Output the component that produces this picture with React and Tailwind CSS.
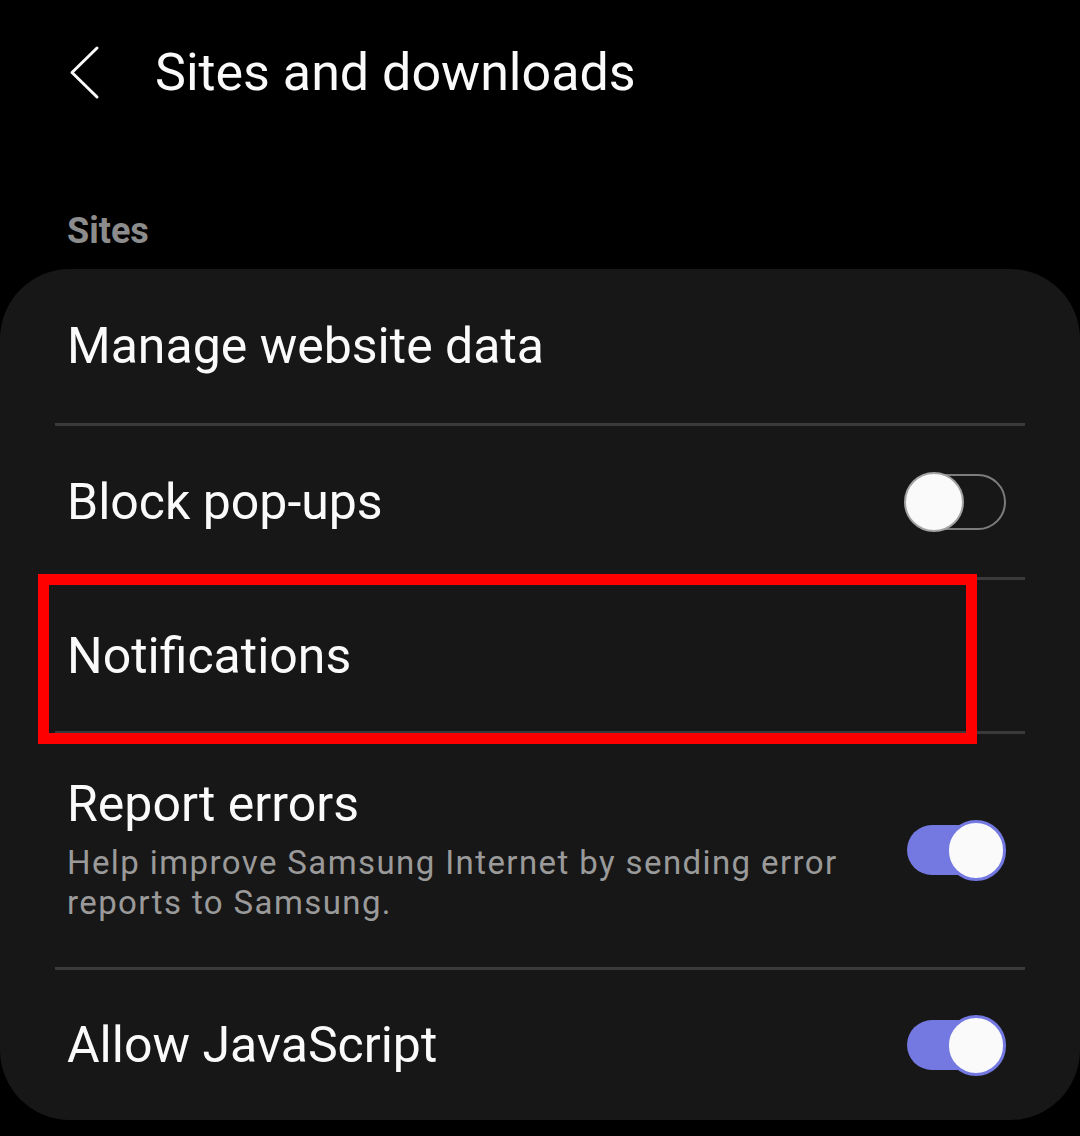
import React from "react";

function ToggleOn() {
  return (
    <div className="relative w-[99px] h-[61px] shrink-0">
      <div className="absolute left-0 top-[5px] w-[94px] h-[50px] rounded-full bg-[#7479e2]" />
      <div className="absolute right-0 top-0 w-[60px] h-[61px] rounded-full bg-[#fafafa] border-[3px] border-[#7479e2]" />
    </div>
  );
}

function ToggleOff() {
  return (
    <div className="relative w-[102px] h-[60px] shrink-0">
      <div className="absolute right-0 top-[2px] w-[98px] h-[56px] rounded-full border-2 border-[#7d7d7d]" />
      <div className="absolute left-0 top-0 w-[60px] h-[60px] rounded-full bg-[#fafafa] border-2 border-[#a3a3a3]" />
    </div>
  );
}

function Divider() {
  return <div className="mx-[55px] h-[3px] bg-[#3a3a3a]" />;
}

export default function App() {
  return (
    <div
      className="relative w-[1080px] h-[1136px] bg-black overflow-hidden text-[#fafafa]"
      style={{ fontFamily: "Roboto, 'Noto Sans', sans-serif" }}
    >
      <div className="h-[146px] flex items-center">
        <svg
          className="ml-[66px]"
          width="38"
          height="56"
          viewBox="0 0 38 56"
          fill="none"
          stroke="#fafafa"
          strokeWidth="3"
          strokeLinecap="round"
          strokeLinejoin="round"
        >
          <path d="M31 3 L6 27.5 L31 52" />
        </svg>
        <div className="ml-[51px] text-[52px] leading-[52px]">Sites and downloads</div>
      </div>

      <div className="pt-[67px] pb-[20px] pl-[67px] text-[36px] leading-[36px] font-bold text-[#8c8c8c]">
        Sites
      </div>

      <div className="bg-[#171717] rounded-[70px] h-[851px]">
        <div className="h-[154px] flex items-center pl-[67px] text-[50px] leading-[50px]">
          Manage website data
        </div>
        <Divider />
        <div className="h-[151px] flex items-center justify-between pl-[67px] pr-[74px]">
          <div className="text-[50px] leading-[50px]">Block pop-ups</div>
          <ToggleOff />
        </div>
        <Divider />
        <div className="h-[151px] flex items-center pl-[67px] text-[50px] leading-[50px]">
          Notifications
        </div>
        <Divider />
        <div className="h-[233px] flex items-center justify-between pl-[67px] pr-[74px]">
          <div className="w-[800px]">
            <div className="text-[50px] leading-[50px]">Report errors</div>
            <div className="mt-[14px] text-[33px] leading-[40px] tracking-[1.4px] text-[#9a9a9a]">
              Help improve Samsung Internet by sending error reports to Samsung.
            </div>
          </div>
          <ToggleOn />
        </div>
        <Divider />
        <div className="h-[150px] flex items-center justify-between pl-[67px] pr-[74px]">
          <div className="text-[50px] leading-[50px]">Allow JavaScript</div>
          <ToggleOn />
        </div>
      </div>

      <div className="absolute left-[38px] top-[574px] w-[939px] h-[170px] border-[11px] border-[#ff0000]" />
    </div>
  );
}
